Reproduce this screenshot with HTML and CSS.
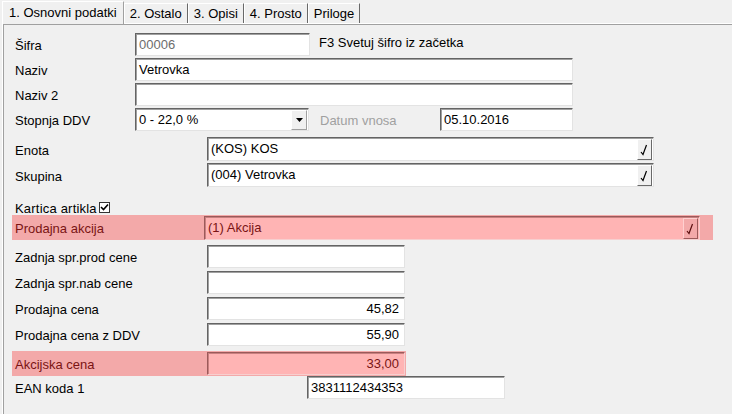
FILE: index.html
```html
<!DOCTYPE html>
<html lang="sl">
<head>
<meta charset="UTF-8">
<title>Artikel</title>
<link rel="stylesheet" href="styles.css">
</head>
<body>
<div class="tabs">
    <div class="tab active">1. Osnovni podatki</div>
    <div class="tab">2. Ostalo</div>
    <div class="tab">3. Opisi</div>
    <div class="tab">4. Prosto</div>
    <div class="tab">Priloge</div>
</div>
<div class="panel">
    <div class="row">
        <span class="lbl w120">Šifra</span>
        <div class="box w175 grey">00006</div>
        <span class="hint">F3 Svetuj šifro iz začetka</span>
    </div>
    <div class="row">
        <span class="lbl w120">Naziv</span>
        <div class="box w438">Vetrovka</div>
    </div>
    <div class="row nudge">
        <span class="lbl w120">Naziv 2</span>
        <div class="box w438"></div>
    </div>
    <div class="row nudge">
        <span class="lbl w120">Stopnja DDV</span>
        <div class="box w174 combo">0 - 22,0 %
            <span class="drop"><svg width="7" height="4" viewBox="0 0 7 4"><path d="M0 0h7L3.5 4z" fill="#000"/></svg></span>
        </div>
        <span class="lbl disabled">Datum vnosa</span>
        <div class="box w133">05.10.2016</div>
    </div>

    <div class="row tall first-lookup">
        <span class="lbl w192">Enota</span>
        <div class="box w447 lookup">(KOS) KOS
            <span class="pick"><svg width="9" height="12" viewBox="0 0 9 12"><path d="M1 8l2 2.5L6.5 1" fill="none" stroke="#000" stroke-width="1.2"/></svg></span>
        </div>
    </div>
    <div class="row tall">
        <span class="lbl w192">Skupina</span>
        <div class="box w447 lookup">(004) Vetrovka
            <span class="pick"><svg width="9" height="12" viewBox="0 0 9 12"><path d="M1 8l2 2.5L6.5 1" fill="none" stroke="#000" stroke-width="1.2"/></svg></span>
        </div>
    </div>

    <div class="row check-row">
        <span class="lbl">Kartica artikla</span>
        <span class="checkbox"><svg width="9" height="9" viewBox="0 0 9 9"><path d="M1 4l2.5 2.5L8 1.5" fill="none" stroke="#000" stroke-width="1.6"/></svg></span>
    </div>

    <div class="row mark wide">
        <span class="lbl w189">Prodajna akcija</span>
        <div class="box w496 lookup">(1) Akcija
            <span class="pick"><svg width="9" height="12" viewBox="0 0 9 12"><path d="M1 8l2 2.5L6.5 1" fill="none" stroke="#5a0f0f" stroke-width="1.2"/></svg></span>
        </div>
    </div>

    <div class="price">
        <div class="row">
            <span class="lbl w192">Zadnja spr.prod cene</span>
            <div class="box w198"></div>
        </div>
        <div class="row">
            <span class="lbl w192">Zadnja spr.nab cene</span>
            <div class="box w198"></div>
        </div>
        <div class="row">
            <span class="lbl w192">Prodajna cena</span>
            <div class="box w198 num">45,82</div>
        </div>
        <div class="row">
            <span class="lbl w192">Prodajna cena z DDV</span>
            <div class="box w198 num">55,90</div>
        </div>
        <div class="row mark short">
            <span class="lbl w192">Akcijska cena</span>
            <div class="box w198 num">33,00</div>
        </div>
        <div class="row ean">
            <span class="lbl w292">EAN koda 1</span>
            <div class="box w198">3831112434353</div>
        </div>
    </div>
</div>
</body>
</html>
```

FILE: styles.css
```css
body {
    margin: 0;
    background: #f0f0f0;
    font-family: "Liberation Sans", Arial, sans-serif;
    font-size: 13px;
    color: #000;
    height: 414px;
    overflow: hidden;
}

/* tab strip */
.tabs {
    display: flex;
    align-items: flex-end;
    height: 23px;
    padding-left: 2px;
    position: relative;
    z-index: 1;
}
.tab {
    height: 19px;
    line-height: 19px;
    padding: 0 5px;
    border-top: 1px solid #fff;
    border-left: 1px solid #fff;
    border-right: 1px solid #696969;
    background: #f0f0f0;
    white-space: nowrap;
}
.tab.active {
    height: 22px;
    line-height: 21px;
    padding: 0 6px 0 6px;
    margin-bottom: -1px;
    border-right-color: #a0a0a0;
}

/* page body */
.panel {
    margin-left: 2px;
    height: 400px;
    border-top: 1px solid #fff;
    border-left: 1px solid #fff;
    box-shadow: inset 1px 1px 0 #a0a0a0;
    padding: 9px 0 0 12px;
    box-sizing: border-box;
}

.row {
    display: flex;
    align-items: center;
    height: 23px;
    margin-bottom: 2px;
}
.row.nudge {
    margin-top: 1px;
}
.row.tall {
    height: 24px;
}
.first-lookup {
    margin-top: 6px;
}

.lbl {
    flex: none;
    white-space: nowrap;
    padding-top: 2px;
}
.w120 { width: 120px; }
.w189 { width: 189px; }
.w192 { width: 192px; }
.w292 { width: 292px; }

.disabled {
    color: #a0a0a0;
    width: 120px;
    margin-left: 11px;
}
.hint {
    margin-left: 9px;
    margin-bottom: 4px;
}

/* edit boxes */
.box {
    position: relative;
    flex: none;
    height: 100%;
    box-sizing: border-box;
    background: #fff;
    border: 1px solid #e3e3e3;
    border-top-color: #646464;
    border-left-color: #646464;
    box-shadow: inset 1px 1px 0 #a0a0a0;
    padding: 2px 0 0 3px;
    line-height: 17px;
    white-space: nowrap;
}
.grey { color: #6d6d6d; }
.num {
    text-align: right;
    padding: 2px 5px 0 0;
}
.w133 { width: 133px; }
.w174 { width: 174px; }
.w175 { width: 175px; }
.w198 { width: 198px; }
.w438 { width: 438px; }
.w447 { width: 447px; }
.w496 { width: 496px; }

/* combo arrow and lookup buttons */
.drop,
.pick {
    position: absolute;
    right: 1px;
    top: 1px;
    bottom: 0;
    width: 15px;
    display: flex;
    align-items: center;
    justify-content: center;
    background: #f0f0f0;
    border-top: 1px solid #fff;
    border-left: 1px solid #fff;
    border-right: 1px solid #696969;
    border-bottom: 1px solid #696969;
    box-sizing: border-box;
}
.drop {
    width: 16px;
    border-right-color: #a0a0a0;
    border-bottom-color: #a0a0a0;
}

/* check box */
.check-row {
    height: 14px;
    margin-top: 14px;
    margin-bottom: 0;
}
.check-row .lbl {
    padding-top: 0;
    margin-top: 1px;
    letter-spacing: 0.2px;
}
.checkbox {
    width: 11px;
    height: 11px;
    margin-left: 2px;
    margin-top: -2px;
    box-sizing: border-box;
    background: #fff;
    border: 1px solid #333;
    display: flex;
    align-items: center;
    justify-content: center;
}

/* highlighted rows */
.mark {
    background: #f3a9a9;
    margin-left: -3px;
    padding-left: 3px;
    height: 25px;
    color: #7a1414;
}
.mark.wide {
    width: 698px;
}
.mark .box {
    height: 24px;
    background: #ffb4b4;
    color: #7a1414;
    border-color: #f7cfcf;
    border-top-color: #9b5a5a;
    border-left-color: #9b5a5a;
    box-shadow: inset 1px 1px 0 #c98080;
    align-self: flex-end;
}
.mark .pick {
    background: #f3a9a9;
    border-top-color: #ffd0d0;
    border-left-color: #ffd0d0;
    border-right-color: #9b5a5a;
    border-bottom-color: #9b5a5a;
}

.price {
    margin-top: 5px;
}
.price .row {
    margin-bottom: 3px;
}
.price .mark.short {
    width: 391px;
    margin-top: 5px;
    margin-bottom: 0;
}
.mark.short .box {
    height: 23px;
    align-self: center;
}
.ean {
    height: 23px;
}
```
